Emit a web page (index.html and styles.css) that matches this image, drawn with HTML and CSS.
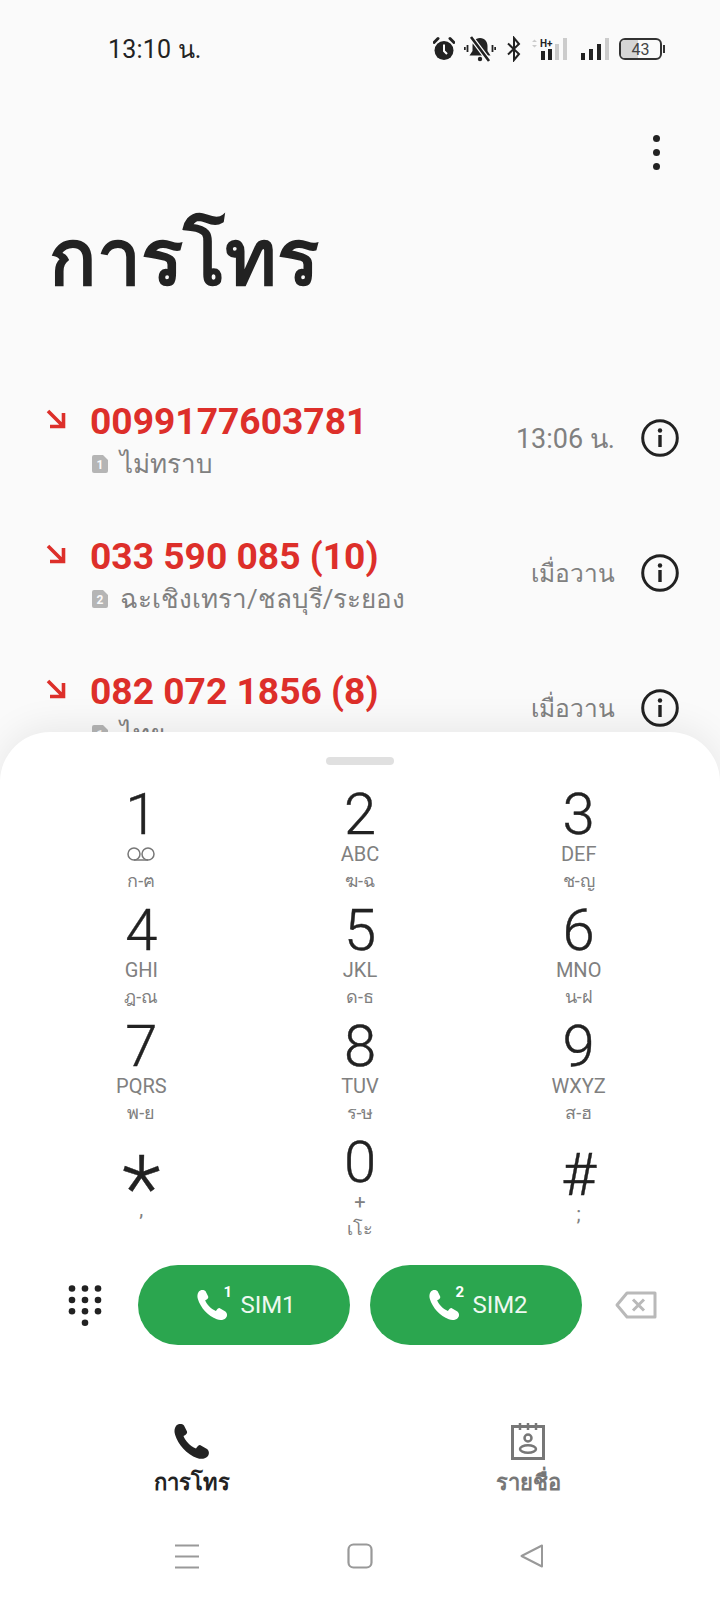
FILE: index.html
```html
<!DOCTYPE html>
<html lang="th">

<head>
    <meta charset="UTF-8">
    <meta name="viewport" content="width=device-width, initial-scale=1.0">
    <title>การโทร</title>
    <link rel="stylesheet" href="styles.css">
</head>

<body>
    <div class="phone">
        <div class="top-area">
            <!-- status bar -->
            <div class="status-bar">
                <div class="clock">13:10 น.</div>
                <div class="status-icons">
                    <svg class="ic-alarm" viewBox="0 0 22 26"><path d="M1 6.500 5 2.500M21 6.500 17 2.500" stroke="#222" stroke-width="3" stroke-linecap="round"/><circle cx="11" cy="14.500" r="9.500" fill="#222"/><path d="M11 8.500v6.500l3 3" stroke="#fff" stroke-width="2" fill="none"/></svg>
                    <svg class="ic-bell" viewBox="0 0 32 26"><path d="M16 2c-5 0-7.500 4-7.500 8v5L5.500 19.500h21L23.500 15v-5c0-4-2.500-8-7.500-8z" fill="#222"/><circle cx="16" cy="23" r="2.200" fill="#222"/><path d="M7 1 25 25" stroke="#fff" stroke-width="5"/><path d="M7 1 25 25" stroke="#222" stroke-width="2.600"/><path d="M3.500 9v7M.8 11v3M28.500 9v7M31.200 11v3" stroke="#222" stroke-width="1.800"/></svg>
                    <svg class="ic-bt" viewBox="0 0 14 26"><path d="M1 7.500 12 18 7 24V2l5 6L1 18.500" fill="none" stroke="#222" stroke-width="2"/></svg>
                    <svg class="ic-sig-h" viewBox="0 0 42 26"><path d="M1 6l2.500-2.500L6 6zM1 9l2.500 2.500L6 9z" fill="#ccc"/><text x="9" y="11" class="hplus">H+</text><rect x="10" y="15" width="4" height="9" fill="#222"/><rect x="17" y="13" width="4" height="11" fill="#222"/><rect x="24" y="8" width="4" height="16" fill="#ccc"/><rect x="32" y="2" width="4" height="22" fill="#ccc"/></svg>
                    <svg class="ic-sig" viewBox="0 0 29 26"><rect x="1" y="17" width="4" height="7" fill="#222"/><rect x="9" y="13" width="4" height="11" fill="#222"/><rect x="17" y="8" width="4" height="16" fill="#222"/><rect x="25" y="2" width="4" height="22" fill="#ccc"/></svg>
                    <div class="battery">
                        <div class="battery-fill"></div>
                        <span class="battery-num">43</span>
                    </div>
                    <div class="battery-nub"></div>
                </div>
            </div>

            <div class="actions">
                <div class="kebab"><span></span><span></span><span></span></div>
            </div>

            <h1 class="title">การโทร</h1>

            <!-- call log -->
            <div class="call-row">
                <svg class="arrow" viewBox="0 0 20 20"><path d="M2 2 16.500 16.500M17.500 4v13.500H4" fill="none" stroke="#dd2f2a" stroke-width="3.600"/></svg>
                <div class="call-text">
                    <div class="call-num">0099177603781</div>
                    <div class="call-sub">
                        <svg class="sim" viewBox="0 0 16 18"><path d="M2 0h9l5 5v11a2 2 0 0 1-2 2H2a2 2 0 0 1-2-2V2a2 2 0 0 1 2-2z" fill="#b5b5b5"/><text x="8" y="14" class="sim-num">1</text></svg>
                        ไม่ทราบ
                    </div>
                </div>
                <div class="call-time">13:06 น.</div>
                <svg class="info" viewBox="0 0 38 38"><circle cx="19" cy="19" r="17.300" fill="none" stroke="#222" stroke-width="3"/><circle cx="19" cy="11.500" r="2.200" fill="#222"/><rect x="17.300" y="16" width="3.400" height="12" fill="#222"/></svg>
            </div>

            <div class="call-row">
                <svg class="arrow" viewBox="0 0 20 20"><path d="M2 2 16.500 16.500M17.500 4v13.500H4" fill="none" stroke="#dd2f2a" stroke-width="3.600"/></svg>
                <div class="call-text">
                    <div class="call-num">033 590 085 (10)</div>
                    <div class="call-sub">
                        <svg class="sim" viewBox="0 0 16 18"><path d="M2 0h9l5 5v11a2 2 0 0 1-2 2H2a2 2 0 0 1-2-2V2a2 2 0 0 1 2-2z" fill="#b5b5b5"/><text x="8" y="14" class="sim-num">2</text></svg>
                        ฉะเชิงเทรา/ชลบุรี/ระยอง
                    </div>
                </div>
                <div class="call-time call-day">เมื่อวาน</div>
                <svg class="info" viewBox="0 0 38 38"><circle cx="19" cy="19" r="17.300" fill="none" stroke="#222" stroke-width="3"/><circle cx="19" cy="11.500" r="2.200" fill="#222"/><rect x="17.300" y="16" width="3.400" height="12" fill="#222"/></svg>
            </div>

            <div class="call-row">
                <svg class="arrow" viewBox="0 0 20 20"><path d="M2 2 16.500 16.500M17.500 4v13.500H4" fill="none" stroke="#dd2f2a" stroke-width="3.600"/></svg>
                <div class="call-text">
                    <div class="call-num">082 072 1856 (8)</div>
                    <div class="call-sub">
                        <svg class="sim" viewBox="0 0 16 18"><path d="M2 0h9l5 5v11a2 2 0 0 1-2 2H2a2 2 0 0 1-2-2V2a2 2 0 0 1 2-2z" fill="#b5b5b5"/><text x="8" y="14" class="sim-num">1</text></svg>
                        ไทย
                    </div>
                </div>
                <div class="call-time call-day">เมื่อวาน</div>
                <svg class="info" viewBox="0 0 38 38"><circle cx="19" cy="19" r="17.300" fill="none" stroke="#222" stroke-width="3"/><circle cx="19" cy="11.500" r="2.200" fill="#222"/><rect x="17.300" y="16" width="3.400" height="12" fill="#222"/></svg>
            </div>
        </div>

        <!-- dial sheet -->
        <div class="sheet">
            <div class="handle"></div>

            <div class="keypad">
                <div class="key"><div class="digit">1</div><svg class="voicemail" viewBox="0 0 30 14"><circle cx="8" cy="7" r="6" fill="none" stroke="#777" stroke-width="1.500"/><circle cx="22" cy="7" r="6" fill="none" stroke="#777" stroke-width="1.500"/><path d="M8 13h14" stroke="#777" stroke-width="1.500"/></svg><div class="thai">ก-ฅ</div></div>
                <div class="key"><div class="digit">2</div><div class="latin">ABC</div><div class="thai">ฆ-ฉ</div></div>
                <div class="key"><div class="digit">3</div><div class="latin">DEF</div><div class="thai">ช-ญ</div></div>
                <div class="key"><div class="digit">4</div><div class="latin">GHI</div><div class="thai">ฎ-ณ</div></div>
                <div class="key"><div class="digit">5</div><div class="latin">JKL</div><div class="thai">ด-ธ</div></div>
                <div class="key"><div class="digit">6</div><div class="latin">MNO</div><div class="thai">น-ฝ</div></div>
                <div class="key"><div class="digit">7</div><div class="latin">PQRS</div><div class="thai">พ-ย</div></div>
                <div class="key"><div class="digit">8</div><div class="latin">TUV</div><div class="thai">ร-ษ</div></div>
                <div class="key"><div class="digit">9</div><div class="latin">WXYZ</div><div class="thai">ส-ฮ</div></div>
                <div class="key"><div class="digit star">*</div><div class="latin mark">,</div></div>
                <div class="key"><div class="digit">0</div><div class="latin">+</div><div class="thai">เโะ</div></div>
                <div class="key"><div class="digit hash">#</div><div class="latin mark">;</div></div>
            </div>

            <div class="call-bar">
                <svg class="dots" viewBox="0 0 34 45"><g fill="#222"><circle cx="4" cy="5.500" r="3.300"/><circle cx="17" cy="5.500" r="3.300"/><circle cx="30" cy="5.500" r="3.300"/><circle cx="4" cy="17" r="3.300"/><circle cx="17" cy="17" r="3.300"/><circle cx="30" cy="17" r="3.300"/><circle cx="4" cy="28.300" r="3.300"/><circle cx="17" cy="28.300" r="3.300"/><circle cx="30" cy="28.300" r="3.300"/><circle cx="17" cy="39.700" r="3.300"/></g></svg>
                <div class="sim-btn">
                    <span class="sim-phone">
                        <svg viewBox="0 0 36 36"><path d="M2 2.500C4 0 8 0 10 2l3 6c.5 1.500-.5 3-3.500 4.500C11 17 16 22.500 22 25c1.500-2 2.500-3.500 4-3.500l7 4c2.500 2 2.500 5.500.5 7.500-2.500 2.500-6.500 3-10.500 1.500C13 31 4 21 1 11 0 7.500.5 4.500 2 2.500z" fill="#fff"/></svg>
                        <span class="sim-sup">1</span>
                    </span>
                    SIM1
                </div>
                <div class="sim-btn">
                    <span class="sim-phone">
                        <svg viewBox="0 0 36 36"><path d="M2 2.500C4 0 8 0 10 2l3 6c.5 1.500-.5 3-3.500 4.500C11 17 16 22.500 22 25c1.500-2 2.500-3.500 4-3.500l7 4c2.500 2 2.500 5.500.5 7.500-2.500 2.500-6.500 3-10.500 1.500C13 31 4 21 1 11 0 7.500.5 4.500 2 2.500z" fill="#fff"/></svg>
                        <span class="sim-sup">2</span>
                    </span>
                    SIM2
                </div>
                <svg class="backspace" viewBox="0 0 42 28"><path d="M12 2h28v24H12L2 14z" fill="none" stroke="#b9b9b9" stroke-width="3" stroke-linejoin="round"/><path d="M18 8.500 29 19.500M29 8.500 18 19.500" stroke="#b9b9b9" stroke-width="3"/></svg>
            </div>

            <div class="tabs">
                <div class="tab tab-on">
                    <svg viewBox="0 0 36 36"><path d="M2 2.500C4 0 8 0 10 2l3 6c.5 1.500-.5 3-3.500 4.500C11 17 16 22.500 22 25c1.500-2 2.500-3.500 4-3.500l7 4c2.500 2 2.500 5.500.5 7.500-2.500 2.500-6.500 3-10.500 1.500C13 31 4 21 1 11 0 7.500.5 4.500 2 2.500z" fill="#222"/></svg>
                    <div class="tab-label">การโทร</div>
                </div>
                <div class="tab">
                    <svg viewBox="0 0 36 37"><rect x="2.500" y="3.500" width="31" height="32" fill="none" stroke="#777" stroke-width="3"/><path d="M10 0v7M18 0v7M26 0v7" stroke="#777" stroke-width="2.500"/><circle cx="18" cy="15" r="3.500" fill="none" stroke="#777" stroke-width="2.500"/><ellipse cx="18" cy="26" rx="8" ry="3.800" fill="none" stroke="#777" stroke-width="2.500"/></svg>
                    <div class="tab-label">รายชื่อ</div>
                </div>
            </div>

            <!-- android nav -->
            <div class="sys-nav">
                <svg class="sys-menu" viewBox="0 0 26 25"><path d="M1 1.500h24M1 12.500h24M1 23.500h24" stroke="#999" stroke-width="2"/></svg>
                <svg class="sys-home" viewBox="0 0 26 26"><rect x="1.500" y="1.500" width="23" height="23" rx="5" fill="none" stroke="#999" stroke-width="2.200"/></svg>
                <svg class="sys-back" viewBox="0 0 24 24"><path d="M22 1.500v21L1.500 12z" fill="none" stroke="#999" stroke-width="2" stroke-linejoin="round"/></svg>
            </div>
        </div>
    </div>
</body>

</html>
```

FILE: styles.css
```css
* {
    margin: 0;
    padding: 0;
    box-sizing: border-box;
}

body {
    background: #fafafa;
    font-family: Roboto, "Noto Sans", "DejaVu Sans", sans-serif;
}

.phone {
    width: 720px;
    height: 1600px;
    overflow: hidden;
}

.top-area {
    height: 732px;
    overflow: hidden;
}

/* --------  STATUS BAR ------------------- */
.status-bar {
    height: 98px;
    display: flex;
    align-items: center;
    justify-content: space-between;
    padding: 0 55px 0 108px;
}

.clock {
    font-size: 25px;
    letter-spacing: 0.2px;
    color: #222;
}

.status-icons {
    display: flex;
    align-items: center;
}

.status-icons svg {
    height: 26px;
}

.ic-alarm {
    width: 22px;
}

.ic-bell {
    width: 32px;
    margin-left: 9px;
}

.ic-bt {
    width: 14px;
    margin-left: 11px;
}

.ic-sig-h {
    width: 42px;
    margin-left: 10px;
}

.ic-sig {
    width: 29px;
    margin-left: 7px;
}

.hplus {
    font-size: 10px;
    font-weight: 700;
    fill: #222;
}

.battery {
    width: 43px;
    height: 22px;
    margin-left: 10px;
    border: 2px solid #333;
    border-radius: 6px;
    position: relative;
    overflow: hidden;
    display: flex;
    align-items: center;
    justify-content: center;
}

.battery-fill {
    position: absolute;
    left: 0;
    top: 0;
    bottom: 0;
    width: 43%;
    background: #d5d5d5;
}

.battery-num {
    font-size: 16px;
    color: #444;
    position: relative;
}

.battery-nub {
    width: 2px;
    height: 8px;
    margin-left: 1px;
    background: #333;
}

/* --------  HEADER ------------------- */
.actions {
    height: 108px;
    display: flex;
    align-items: center;
    justify-content: flex-end;
    padding-right: 60px;
}

.kebab {
    display: flex;
    flex-direction: column;
    gap: 7px;
}

.kebab span {
    width: 7px;
    height: 7px;
    border-radius: 50%;
    background: #222;
}

.title {
    height: 166px;
    line-height: 104px;
    padding-left: 49px;
    font-size: 78.5px;
    font-weight: 700;
    color: #222;
}

/* --------  CALL LOG ------------------- */
.call-row {
    height: 135px;
    display: flex;
    align-items: center;
    padding-left: 46px;
}

.arrow {
    width: 20px;
    height: 20px;
    margin-right: 24px;
    align-self: flex-start;
    margin-top: 37px;
    flex: none;
}

.call-text {
    flex: 1;
    padding-top: 4px;
}

.call-num {
    font-size: 37.2px;
    line-height: 44px;
    font-weight: 700;
    color: #dd2f2a;
}

.call-sub {
    display: flex;
    align-items: center;
    gap: 12px;
    padding-left: 2px;
    font-size: 26px;
    line-height: 42px;
    color: #808080;
}

.sim {
    width: 16px;
    height: 18px;
}

.sim-num {
    font-size: 12px;
    font-weight: 700;
    fill: #fafafa;
    text-anchor: middle;
}

.call-time {
    font-size: 27px;
    color: #808080;
    margin-right: 26px;
    margin-top: -2px;
}

.call-day {
    font-size: 24.5px;
}

.info {
    width: 38px;
    height: 38px;
    margin-right: 41px;
    margin-top: -4px;
    flex: none;
}

/* --------  DIAL SHEET ------------------- */
.sheet {
    height: 868px;
    background: #fff;
    border-radius: 50px 50px 0 0;
    box-shadow: 0 -4px 36px rgba(0, 0, 0, 0.08);
    padding-top: 25px;
    position: relative;
}

.handle {
    width: 68px;
    height: 8px;
    border-radius: 4px;
    background: #e0e0e0;
    margin: 0 auto;
}

.keypad {
    margin-top: 21px;
    padding: 0 32px;
    display: grid;
    grid-template-columns: repeat(3, 1fr);
    grid-auto-rows: 116px;
    height: 464px;
}

.key {
    display: flex;
    flex-direction: column;
    align-items: center;
}

.digit {
    font-size: 58px;
    font-weight: 300;
    line-height: 56px;
    color: #222;
    -webkit-text-stroke: 0.4px #222;
}

.star {
    font-size: 90px;
    line-height: 76px;
    padding-top: 18px;
    height: 63px;
}

.hash {
    font-size: 60px;
    padding-top: 13px;
    height: 68px;
}

.latin {
    font-size: 20px;
    line-height: 24px;
    color: #808080;
}

.mark {
    line-height: 24px;
    font-size: 20px;
}

.thai {
    font-size: 18px;
    line-height: 30px;
    color: #808080;
}

.voicemail {
    width: 30px;
    height: 14px;
    margin: 5px 0;
}

/* --------  CALL BUTTONS ------------------- */
.call-bar {
    margin-top: 15px;
    height: 80px;
    display: flex;
    align-items: center;
    padding-left: 68px;
}

.dots {
    width: 34px;
    height: 45px;
    margin-right: 36px;
}

.sim-btn {
    width: 212px;
    height: 80px;
    border-radius: 40px;
    background: #2ba64f;
    color: #eef8f0;
    font-size: 24px;
    display: flex;
    align-items: center;
    justify-content: center;
    gap: 12px;
    margin-right: 20px;
    padding-left: 5px;
}

.sim-phone {
    position: relative;
    width: 31px;
    height: 32px;
}

.sim-phone svg {
    width: 31px;
    height: 32px;
    display: block;
}

.sim-sup {
    position: absolute;
    left: 26px;
    top: -6px;
    font-size: 15px;
    font-weight: 700;
    color: #fff;
}

.backspace {
    width: 42px;
    height: 28px;
    margin-left: 13px;
}

/* --------  TABS ------------------- */
.tabs {
    margin-top: 78px;
    display: grid;
    grid-template-columns: 384px 288px;
}

.tab {
    display: flex;
    flex-direction: column;
    align-items: center;
    color: #777;
}

.tab svg {
    width: 36px;
    height: 37px;
}

.tab-label {
    font-size: 22px;
    font-weight: 700;
    line-height: 46px;
}

.tab-on {
    color: #222;
}

/* --------  SYSTEM NAV ------------------- */
.sys-nav {
    margin-top: 37px;
    display: flex;
    align-items: center;
    gap: 147px;
    padding-left: 174px;
}

.sys-menu {
    width: 26px;
    height: 25px;
}

.sys-home {
    width: 26px;
    height: 26px;
}

.sys-back {
    width: 24px;
    height: 24px;
}
```
